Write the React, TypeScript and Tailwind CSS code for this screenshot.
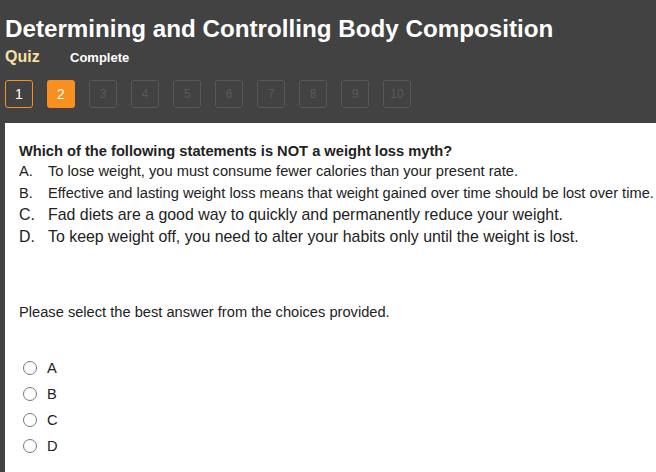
const OPTIONS = [
  { key: "A", text: "To lose weight, you must consume fewer calories than your present rate.", size: "text-[14.67px]" },
  { key: "B", text: "Effective and lasting weight loss means that weight gained over time should be lost over time.", size: "text-[14.67px]" },
  { key: "C", text: "Fad diets are a good way to quickly and permanently reduce your weight.", size: "text-[15.9px]" },
  { key: "D", text: "To keep weight off, you need to alter your habits only until the weight is lost.", size: "text-[15.9px]" },
];

function PageBox({ n, current }: { n: number; current: number }) {
  if (n === current) {
    return (
      <div className="w-[28px] h-[28px] rounded-[3px] bg-[#f7901e] flex items-center justify-center text-[14px] text-white">
        {n}
      </div>
    );
  }
  if (n < current) {
    return (
      <div className="w-[28px] h-[28px] rounded-[3px] border border-[#f7901e] flex items-center justify-center text-[14px] text-white">
        {n}
      </div>
    );
  }
  return (
    <div className="w-[28px] h-[28px] rounded-[3px] border border-[#585858] flex items-center justify-center text-[12px] text-[#5a5a5a]">
      {n}
    </div>
  );
}

export default function App() {
  return (
    <div className="w-[656px] h-[472px] bg-[#424242] overflow-hidden font-['Liberation_Sans',Arial,sans-serif] flex flex-col">
      <div className="pl-[5px] pt-[14px]">
        <h1 className="text-[24.2px] font-bold text-white leading-[30px]">Determining and Controlling Body Composition</h1>
        <div className="flex items-baseline mt-[1px] h-[20px]">
          <span className="text-[16px] font-bold text-[#f6e0a4] w-[65px]">Quiz</span>
          <span className="text-[13px] font-bold text-white">Complete</span>
        </div>
        <div className="flex gap-[14px] mt-[15px]">
          {Array.from({ length: 10 }, (_, i) => (
            <PageBox key={i} n={i + 1} current={2} />
          ))}
        </div>
      </div>
      <div className="ml-[5px] mt-[15px] flex-1 bg-white pl-[14px] pt-[19px] text-[#222]">
        <p className="text-[14.67px] font-bold leading-[18px]">Which of the following statements is NOT a weight loss myth?</p>
        <div className="flex flex-col">
          {OPTIONS.map((o) => (
            <div key={o.key} className={`flex ${o.size} leading-[22px]`}>
              <span className="w-[29px]">{o.key}.</span>
              <span>{o.text}</span>
            </div>
          ))}
        </div>
        <p className="text-[14.67px] mt-[55px] leading-[18px]">Please select the best answer from the choices provided.</p>
        <div className="flex flex-col gap-[8px] mt-[38px]">
          {["A", "B", "C", "D"].map((k) => (
            <label key={k} className="flex items-center gap-[10px] pl-[4px] text-[14.67px] leading-[18px]">
              <span className="w-[14px] h-[14px] rounded-full border border-[#777] bg-white" />
              {k}
            </label>
          ))}
        </div>
      </div>
    </div>
  );
}
